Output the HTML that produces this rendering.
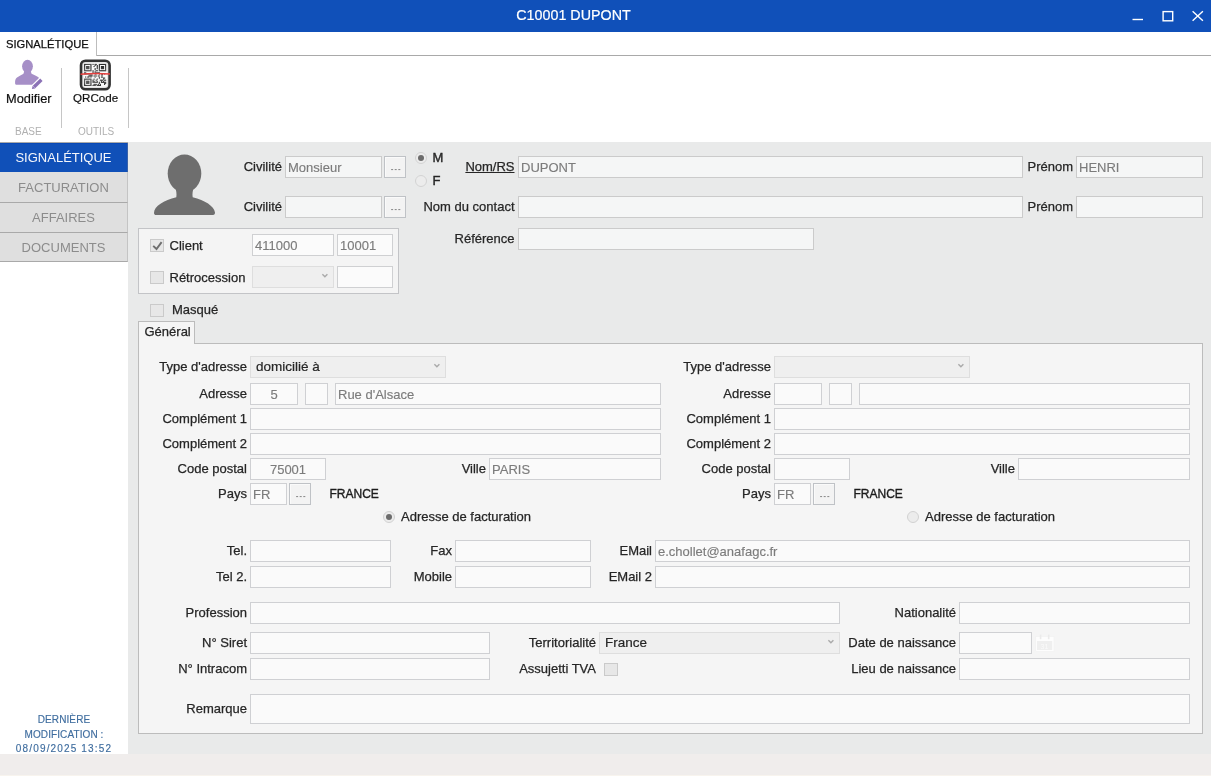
<!DOCTYPE html><html><head><meta charset="utf-8"><style>
*{margin:0;padding:0;box-sizing:border-box}
html,body{width:1211px;height:776px;overflow:hidden;background:#e9eaea;font-family:"Liberation Sans",sans-serif}
#wrap{left:0;top:0;width:1211px;height:776px;will-change:transform}
div,span,svg{position:absolute}
.t{font-size:13px;line-height:16px;color:#262626;white-space:nowrap;-webkit-text-stroke:0.25px #262626}
.r{text-align:right}
.fld{background:#fafafa;border:1px solid #cfd0d3}
.top .fld{background:#f5f6f6;border-color:#cbcbcb}
.top .fld.wf{background:#fbfbfb;border-color:#cfd0d2}
.v{top:1px;line-height:20px;font-size:13px;color:#7c7c7c;white-space:nowrap;-webkit-text-stroke:0.15px #7c7c7c}
.btn{background:#f3f3f3;border:1px solid #bfc2c6;box-shadow:inset 1px 1px 0 #fafafa}
.cmb{background:#efefef;border:1px solid #dedede}
.cv{left:5px;top:0;line-height:20px;font-size:13.5px;color:#262626;white-space:nowrap;-webkit-text-stroke:0.2px #262626}
.chev{top:6px}
.chk{width:14px;height:13px;background:#e7e7e7;border:1px solid #cacaca}
.rad{width:12px;height:12px;border-radius:50%;background:#ececec;border:1px solid #d2d2d2}
.dot{left:2px;top:2px;width:6px;height:6px;border-radius:50%;background:#6c6c6c}
</style></head><body><div id="wrap">
<div style="left:0;top:0;width:1211px;height:32px;background:#1050b9"></div>
<div style="left:0;top:5px;width:1147px;text-align:center;font-size:14.3px;line-height:20px;color:#fff;-webkit-text-stroke:0.2px #fff">C10001 DUPONT</div>
<svg style="left:1128px;top:6px" width="83" height="20"><path d="M4.5 13.5 H15" stroke="#fff" stroke-width="1.4"/><rect x="35.1" y="5.6" width="9.6" height="9.2" fill="none" stroke="#fff" stroke-width="1.4"/><path d="M64.6 5.2 L74.9 14.8 M74.9 5.2 L64.6 14.8" stroke="#fff" stroke-width="1.4"/></svg>
<div style="left:0;top:32px;width:1211px;height:110px;background:#fff"></div>
<div style="left:96px;top:55px;width:1115px;height:1px;background:#a9a9a9"></div>
<div style="left:96px;top:32px;width:1px;height:24px;background:#bdbdbd"></div>
<div style="left:6px;top:36px;font-size:11.2px;line-height:16px;color:#111;-webkit-text-stroke:0.25px #111">SIGNALÉTIQUE</div>
<svg style="left:0;top:55px" width="50" height="40" viewBox="0 0 50 40"><ellipse cx="27.5" cy="11.3" rx="5.4" ry="6.6" fill="#a68fc7"/><path d="M24.3 15.5 L30.7 15.5 L31.5 19 L23.5 19 Z" fill="#a68fc7"/><path d="M15.1 28.2 C15 25.5 15.4 23.8 17 22.5 C19 21 21.5 19.6 24 18.4 L31 18.4 C34 19.5 36.8 21 39 22.8 L38 29.7 L17 29.7 C15.8 29.7 15.1 29.2 15.1 28.2 Z" fill="#a68fc7"/><path d="M33.2 32.8 L41.6 24.6" stroke="#fff" stroke-width="6"/><path d="M34 32 L41.4 24.8" stroke="#8b72b6" stroke-width="3.4"/><path d="M31.9 34 L32.6 30.8 L35.3 33.4 Z" fill="#8b72b6"/></svg>
<div style="left:6px;top:90.5px;font-size:12.8px;line-height:16px;color:#111;-webkit-text-stroke:0.2px #111">Modifier</div>
<div style="left:15px;top:125px;font-size:10px;line-height:14px;color:#b0b0b0">BASE</div>
<div style="left:61px;top:68px;width:1px;height:60px;background:#c6c6c6"></div>
<svg style="left:78px;top:58px" width="34" height="34" viewBox="0 0 34 34"><rect x="3" y="2.7" width="28.6" height="28.6" rx="4.5" fill="#e2e2e2" stroke="#333" stroke-width="2.6"/><rect x="5.5" y="5.2" width="23.6" height="23.6" rx="1.5" fill="#fafafa"/><rect x="6.10" y="5.90" width="1.10" height="1.10" fill="#2a2a2a"/><rect x="7.15" y="5.90" width="1.10" height="1.10" fill="#2a2a2a"/><rect x="8.20" y="5.90" width="1.10" height="1.10" fill="#2a2a2a"/><rect x="9.25" y="5.90" width="1.10" height="1.10" fill="#2a2a2a"/><rect x="10.30" y="5.90" width="1.10" height="1.10" fill="#2a2a2a"/><rect x="11.35" y="5.90" width="1.10" height="1.10" fill="#2a2a2a"/><rect x="12.40" y="5.90" width="1.10" height="1.10" fill="#2a2a2a"/><rect x="14.50" y="5.90" width="1.10" height="1.10" fill="#2a2a2a"/><rect x="16.60" y="5.90" width="1.10" height="1.10" fill="#2a2a2a"/><rect x="17.65" y="5.90" width="1.10" height="1.10" fill="#2a2a2a"/><rect x="20.80" y="5.90" width="1.10" height="1.10" fill="#2a2a2a"/><rect x="21.85" y="5.90" width="1.10" height="1.10" fill="#2a2a2a"/><rect x="22.90" y="5.90" width="1.10" height="1.10" fill="#2a2a2a"/><rect x="23.95" y="5.90" width="1.10" height="1.10" fill="#2a2a2a"/><rect x="25.00" y="5.90" width="1.10" height="1.10" fill="#2a2a2a"/><rect x="26.05" y="5.90" width="1.10" height="1.10" fill="#2a2a2a"/><rect x="27.10" y="5.90" width="1.10" height="1.10" fill="#2a2a2a"/><rect x="6.10" y="6.95" width="1.10" height="1.10" fill="#2a2a2a"/><rect x="12.40" y="6.95" width="1.10" height="1.10" fill="#2a2a2a"/><rect x="16.60" y="6.95" width="1.10" height="1.10" fill="#2a2a2a"/><rect x="18.70" y="6.95" width="1.10" height="1.10" fill="#2a2a2a"/><rect x="20.80" y="6.95" width="1.10" height="1.10" fill="#2a2a2a"/><rect x="27.10" y="6.95" width="1.10" height="1.10" fill="#2a2a2a"/><rect x="6.10" y="8.00" width="1.10" height="1.10" fill="#2a2a2a"/><rect x="8.20" y="8.00" width="1.10" height="1.10" fill="#2a2a2a"/><rect x="9.25" y="8.00" width="1.10" height="1.10" fill="#2a2a2a"/><rect x="10.30" y="8.00" width="1.10" height="1.10" fill="#2a2a2a"/><rect x="12.40" y="8.00" width="1.10" height="1.10" fill="#2a2a2a"/><rect x="15.55" y="8.00" width="1.10" height="1.10" fill="#2a2a2a"/><rect x="18.70" y="8.00" width="1.10" height="1.10" fill="#2a2a2a"/><rect x="20.80" y="8.00" width="1.10" height="1.10" fill="#2a2a2a"/><rect x="22.90" y="8.00" width="1.10" height="1.10" fill="#2a2a2a"/><rect x="23.95" y="8.00" width="1.10" height="1.10" fill="#2a2a2a"/><rect x="25.00" y="8.00" width="1.10" height="1.10" fill="#2a2a2a"/><rect x="27.10" y="8.00" width="1.10" height="1.10" fill="#2a2a2a"/><rect x="6.10" y="9.05" width="1.10" height="1.10" fill="#2a2a2a"/><rect x="8.20" y="9.05" width="1.10" height="1.10" fill="#2a2a2a"/><rect x="9.25" y="9.05" width="1.10" height="1.10" fill="#2a2a2a"/><rect x="10.30" y="9.05" width="1.10" height="1.10" fill="#2a2a2a"/><rect x="12.40" y="9.05" width="1.10" height="1.10" fill="#2a2a2a"/><rect x="18.70" y="9.05" width="1.10" height="1.10" fill="#2a2a2a"/><rect x="20.80" y="9.05" width="1.10" height="1.10" fill="#2a2a2a"/><rect x="22.90" y="9.05" width="1.10" height="1.10" fill="#2a2a2a"/><rect x="23.95" y="9.05" width="1.10" height="1.10" fill="#2a2a2a"/><rect x="25.00" y="9.05" width="1.10" height="1.10" fill="#2a2a2a"/><rect x="27.10" y="9.05" width="1.10" height="1.10" fill="#2a2a2a"/><rect x="6.10" y="10.10" width="1.10" height="1.10" fill="#2a2a2a"/><rect x="8.20" y="10.10" width="1.10" height="1.10" fill="#2a2a2a"/><rect x="9.25" y="10.10" width="1.10" height="1.10" fill="#2a2a2a"/><rect x="10.30" y="10.10" width="1.10" height="1.10" fill="#2a2a2a"/><rect x="12.40" y="10.10" width="1.10" height="1.10" fill="#2a2a2a"/><rect x="16.60" y="10.10" width="1.10" height="1.10" fill="#2a2a2a"/><rect x="18.70" y="10.10" width="1.10" height="1.10" fill="#2a2a2a"/><rect x="20.80" y="10.10" width="1.10" height="1.10" fill="#2a2a2a"/><rect x="22.90" y="10.10" width="1.10" height="1.10" fill="#2a2a2a"/><rect x="23.95" y="10.10" width="1.10" height="1.10" fill="#2a2a2a"/><rect x="25.00" y="10.10" width="1.10" height="1.10" fill="#2a2a2a"/><rect x="27.10" y="10.10" width="1.10" height="1.10" fill="#2a2a2a"/><rect x="6.10" y="11.15" width="1.10" height="1.10" fill="#2a2a2a"/><rect x="12.40" y="11.15" width="1.10" height="1.10" fill="#2a2a2a"/><rect x="16.60" y="11.15" width="1.10" height="1.10" fill="#2a2a2a"/><rect x="20.80" y="11.15" width="1.10" height="1.10" fill="#2a2a2a"/><rect x="27.10" y="11.15" width="1.10" height="1.10" fill="#2a2a2a"/><rect x="6.10" y="12.20" width="1.10" height="1.10" fill="#2a2a2a"/><rect x="7.15" y="12.20" width="1.10" height="1.10" fill="#2a2a2a"/><rect x="8.20" y="12.20" width="1.10" height="1.10" fill="#2a2a2a"/><rect x="9.25" y="12.20" width="1.10" height="1.10" fill="#2a2a2a"/><rect x="10.30" y="12.20" width="1.10" height="1.10" fill="#2a2a2a"/><rect x="11.35" y="12.20" width="1.10" height="1.10" fill="#2a2a2a"/><rect x="12.40" y="12.20" width="1.10" height="1.10" fill="#2a2a2a"/><rect x="14.50" y="12.20" width="1.10" height="1.10" fill="#2a2a2a"/><rect x="17.65" y="12.20" width="1.10" height="1.10" fill="#2a2a2a"/><rect x="18.70" y="12.20" width="1.10" height="1.10" fill="#2a2a2a"/><rect x="20.80" y="12.20" width="1.10" height="1.10" fill="#2a2a2a"/><rect x="21.85" y="12.20" width="1.10" height="1.10" fill="#2a2a2a"/><rect x="22.90" y="12.20" width="1.10" height="1.10" fill="#2a2a2a"/><rect x="23.95" y="12.20" width="1.10" height="1.10" fill="#2a2a2a"/><rect x="25.00" y="12.20" width="1.10" height="1.10" fill="#2a2a2a"/><rect x="26.05" y="12.20" width="1.10" height="1.10" fill="#2a2a2a"/><rect x="27.10" y="12.20" width="1.10" height="1.10" fill="#2a2a2a"/><rect x="14.50" y="13.25" width="1.10" height="1.10" fill="#2a2a2a"/><rect x="16.60" y="13.25" width="1.10" height="1.10" fill="#2a2a2a"/><rect x="6.10" y="14.30" width="1.10" height="1.10" fill="#2a2a2a"/><rect x="7.15" y="14.30" width="1.10" height="1.10" fill="#2a2a2a"/><rect x="14.50" y="14.30" width="1.10" height="1.10" fill="#2a2a2a"/><rect x="16.60" y="14.30" width="1.10" height="1.10" fill="#2a2a2a"/><rect x="17.65" y="14.30" width="1.10" height="1.10" fill="#2a2a2a"/><rect x="18.70" y="14.30" width="1.10" height="1.10" fill="#2a2a2a"/><rect x="19.75" y="14.30" width="1.10" height="1.10" fill="#2a2a2a"/><rect x="20.80" y="14.30" width="1.10" height="1.10" fill="#2a2a2a"/><rect x="6.10" y="15.35" width="1.10" height="1.10" fill="#2a2a2a"/><rect x="7.15" y="15.35" width="1.10" height="1.10" fill="#2a2a2a"/><rect x="8.20" y="15.35" width="1.10" height="1.10" fill="#2a2a2a"/><rect x="9.25" y="15.35" width="1.10" height="1.10" fill="#2a2a2a"/><rect x="10.30" y="15.35" width="1.10" height="1.10" fill="#2a2a2a"/><rect x="17.65" y="15.35" width="1.10" height="1.10" fill="#2a2a2a"/><rect x="23.95" y="15.35" width="1.10" height="1.10" fill="#2a2a2a"/><rect x="26.05" y="15.35" width="1.10" height="1.10" fill="#2a2a2a"/><rect x="11.35" y="16.40" width="1.10" height="1.10" fill="#2a2a2a"/><rect x="12.40" y="16.40" width="1.10" height="1.10" fill="#2a2a2a"/><rect x="13.45" y="16.40" width="1.10" height="1.10" fill="#2a2a2a"/><rect x="16.60" y="16.40" width="1.10" height="1.10" fill="#2a2a2a"/><rect x="20.80" y="16.40" width="1.10" height="1.10" fill="#2a2a2a"/><rect x="22.90" y="16.40" width="1.10" height="1.10" fill="#2a2a2a"/><rect x="23.95" y="16.40" width="1.10" height="1.10" fill="#2a2a2a"/><rect x="10.30" y="17.45" width="1.10" height="1.10" fill="#2a2a2a"/><rect x="11.35" y="17.45" width="1.10" height="1.10" fill="#2a2a2a"/><rect x="12.40" y="17.45" width="1.10" height="1.10" fill="#2a2a2a"/><rect x="13.45" y="17.45" width="1.10" height="1.10" fill="#2a2a2a"/><rect x="15.55" y="17.45" width="1.10" height="1.10" fill="#2a2a2a"/><rect x="17.65" y="17.45" width="1.10" height="1.10" fill="#2a2a2a"/><rect x="19.75" y="17.45" width="1.10" height="1.10" fill="#2a2a2a"/><rect x="7.15" y="18.50" width="1.10" height="1.10" fill="#2a2a2a"/><rect x="9.25" y="18.50" width="1.10" height="1.10" fill="#2a2a2a"/><rect x="10.30" y="18.50" width="1.10" height="1.10" fill="#2a2a2a"/><rect x="12.40" y="18.50" width="1.10" height="1.10" fill="#2a2a2a"/><rect x="16.60" y="18.50" width="1.10" height="1.10" fill="#2a2a2a"/><rect x="20.80" y="18.50" width="1.10" height="1.10" fill="#2a2a2a"/><rect x="22.90" y="18.50" width="1.10" height="1.10" fill="#2a2a2a"/><rect x="23.95" y="18.50" width="1.10" height="1.10" fill="#2a2a2a"/><rect x="20.80" y="19.55" width="1.10" height="1.10" fill="#2a2a2a"/><rect x="25.00" y="19.55" width="1.10" height="1.10" fill="#2a2a2a"/><rect x="26.05" y="19.55" width="1.10" height="1.10" fill="#2a2a2a"/><rect x="6.10" y="20.60" width="1.10" height="1.10" fill="#2a2a2a"/><rect x="7.15" y="20.60" width="1.10" height="1.10" fill="#2a2a2a"/><rect x="8.20" y="20.60" width="1.10" height="1.10" fill="#2a2a2a"/><rect x="9.25" y="20.60" width="1.10" height="1.10" fill="#2a2a2a"/><rect x="10.30" y="20.60" width="1.10" height="1.10" fill="#2a2a2a"/><rect x="11.35" y="20.60" width="1.10" height="1.10" fill="#2a2a2a"/><rect x="12.40" y="20.60" width="1.10" height="1.10" fill="#2a2a2a"/><rect x="15.55" y="20.60" width="1.10" height="1.10" fill="#2a2a2a"/><rect x="18.70" y="20.60" width="1.10" height="1.10" fill="#2a2a2a"/><rect x="25.00" y="20.60" width="1.10" height="1.10" fill="#2a2a2a"/><rect x="6.10" y="21.65" width="1.10" height="1.10" fill="#2a2a2a"/><rect x="12.40" y="21.65" width="1.10" height="1.10" fill="#2a2a2a"/><rect x="14.50" y="21.65" width="1.10" height="1.10" fill="#2a2a2a"/><rect x="17.65" y="21.65" width="1.10" height="1.10" fill="#2a2a2a"/><rect x="21.85" y="21.65" width="1.10" height="1.10" fill="#2a2a2a"/><rect x="22.90" y="21.65" width="1.10" height="1.10" fill="#2a2a2a"/><rect x="23.95" y="21.65" width="1.10" height="1.10" fill="#2a2a2a"/><rect x="26.05" y="21.65" width="1.10" height="1.10" fill="#2a2a2a"/><rect x="27.10" y="21.65" width="1.10" height="1.10" fill="#2a2a2a"/><rect x="6.10" y="22.70" width="1.10" height="1.10" fill="#2a2a2a"/><rect x="8.20" y="22.70" width="1.10" height="1.10" fill="#2a2a2a"/><rect x="9.25" y="22.70" width="1.10" height="1.10" fill="#2a2a2a"/><rect x="10.30" y="22.70" width="1.10" height="1.10" fill="#2a2a2a"/><rect x="12.40" y="22.70" width="1.10" height="1.10" fill="#2a2a2a"/><rect x="14.50" y="22.70" width="1.10" height="1.10" fill="#2a2a2a"/><rect x="15.55" y="22.70" width="1.10" height="1.10" fill="#2a2a2a"/><rect x="18.70" y="22.70" width="1.10" height="1.10" fill="#2a2a2a"/><rect x="22.90" y="22.70" width="1.10" height="1.10" fill="#2a2a2a"/><rect x="25.00" y="22.70" width="1.10" height="1.10" fill="#2a2a2a"/><rect x="6.10" y="23.75" width="1.10" height="1.10" fill="#2a2a2a"/><rect x="8.20" y="23.75" width="1.10" height="1.10" fill="#2a2a2a"/><rect x="9.25" y="23.75" width="1.10" height="1.10" fill="#2a2a2a"/><rect x="10.30" y="23.75" width="1.10" height="1.10" fill="#2a2a2a"/><rect x="12.40" y="23.75" width="1.10" height="1.10" fill="#2a2a2a"/><rect x="14.50" y="23.75" width="1.10" height="1.10" fill="#2a2a2a"/><rect x="15.55" y="23.75" width="1.10" height="1.10" fill="#2a2a2a"/><rect x="16.60" y="23.75" width="1.10" height="1.10" fill="#2a2a2a"/><rect x="17.65" y="23.75" width="1.10" height="1.10" fill="#2a2a2a"/><rect x="18.70" y="23.75" width="1.10" height="1.10" fill="#2a2a2a"/><rect x="20.80" y="23.75" width="1.10" height="1.10" fill="#2a2a2a"/><rect x="22.90" y="23.75" width="1.10" height="1.10" fill="#2a2a2a"/><rect x="23.95" y="23.75" width="1.10" height="1.10" fill="#2a2a2a"/><rect x="25.00" y="23.75" width="1.10" height="1.10" fill="#2a2a2a"/><rect x="26.05" y="23.75" width="1.10" height="1.10" fill="#2a2a2a"/><rect x="27.10" y="23.75" width="1.10" height="1.10" fill="#2a2a2a"/><rect x="6.10" y="24.80" width="1.10" height="1.10" fill="#2a2a2a"/><rect x="8.20" y="24.80" width="1.10" height="1.10" fill="#2a2a2a"/><rect x="9.25" y="24.80" width="1.10" height="1.10" fill="#2a2a2a"/><rect x="10.30" y="24.80" width="1.10" height="1.10" fill="#2a2a2a"/><rect x="12.40" y="24.80" width="1.10" height="1.10" fill="#2a2a2a"/><rect x="20.80" y="24.80" width="1.10" height="1.10" fill="#2a2a2a"/><rect x="26.05" y="24.80" width="1.10" height="1.10" fill="#2a2a2a"/><rect x="27.10" y="24.80" width="1.10" height="1.10" fill="#2a2a2a"/><rect x="6.10" y="25.85" width="1.10" height="1.10" fill="#2a2a2a"/><rect x="12.40" y="25.85" width="1.10" height="1.10" fill="#2a2a2a"/><rect x="15.55" y="25.85" width="1.10" height="1.10" fill="#2a2a2a"/><rect x="16.60" y="25.85" width="1.10" height="1.10" fill="#2a2a2a"/><rect x="17.65" y="25.85" width="1.10" height="1.10" fill="#2a2a2a"/><rect x="19.75" y="25.85" width="1.10" height="1.10" fill="#2a2a2a"/><rect x="21.85" y="25.85" width="1.10" height="1.10" fill="#2a2a2a"/><rect x="26.05" y="25.85" width="1.10" height="1.10" fill="#2a2a2a"/><rect x="6.10" y="26.90" width="1.10" height="1.10" fill="#2a2a2a"/><rect x="7.15" y="26.90" width="1.10" height="1.10" fill="#2a2a2a"/><rect x="8.20" y="26.90" width="1.10" height="1.10" fill="#2a2a2a"/><rect x="9.25" y="26.90" width="1.10" height="1.10" fill="#2a2a2a"/><rect x="10.30" y="26.90" width="1.10" height="1.10" fill="#2a2a2a"/><rect x="11.35" y="26.90" width="1.10" height="1.10" fill="#2a2a2a"/><rect x="12.40" y="26.90" width="1.10" height="1.10" fill="#2a2a2a"/><rect x="14.50" y="26.90" width="1.10" height="1.10" fill="#2a2a2a"/><rect x="15.55" y="26.90" width="1.10" height="1.10" fill="#2a2a2a"/><rect x="16.60" y="26.90" width="1.10" height="1.10" fill="#2a2a2a"/><rect x="18.70" y="26.90" width="1.10" height="1.10" fill="#2a2a2a"/><rect x="19.75" y="26.90" width="1.10" height="1.10" fill="#2a2a2a"/><rect x="20.80" y="26.90" width="1.10" height="1.10" fill="#2a2a2a"/><rect x="21.85" y="26.90" width="1.10" height="1.10" fill="#2a2a2a"/><path d="M2.5 16.3 C10 15.5 24 15.5 32 16" stroke="#e8403f" stroke-width="1.4" fill="none"/></svg>
<div style="left:73px;top:90px;font-size:11.6px;line-height:16px;color:#111;-webkit-text-stroke:0.2px #111">QRCode</div>
<div style="left:78px;top:125px;font-size:10px;line-height:14px;color:#b0b0b0">OUTILS</div>
<div style="left:128px;top:68px;width:1px;height:60px;background:#c6c6c6"></div>
<div style="left:0;top:142px;width:128px;height:612px;background:#fff"></div>
<div style="left:0;top:142px;width:128px;height:30px;background:#1050b8"></div>
<div style="left:0;top:142px;width:128px;height:1px;background:#a9a9a9"></div>
<div style="left:0;top:143px;width:127px;height:1px;background:#0848b6"></div>
<div style="left:127px;top:143px;width:1px;height:29px;background:#3a62a8"></div>
<div style="left:0;top:150px;width:127px;text-align:center;font-size:13px;line-height:16px;color:#f4f6fb">SIGNALÉTIQUE</div>
<div style="left:0;top:172px;width:128px;height:31px;background:#dfdfdf;border-right:1px solid #c4c4c4;border-bottom:1px solid #a9a9a9"></div>
<div style="left:0;top:180px;width:127px;text-align:center;font-size:13px;line-height:16px;color:#8c8c8c">FACTURATION</div>
<div style="left:0;top:203px;width:128px;height:30px;background:#dfdfdf;border-right:1px solid #c4c4c4;border-bottom:1px solid #a9a9a9"></div>
<div style="left:0;top:210px;width:127px;text-align:center;font-size:13px;line-height:16px;color:#8c8c8c">AFFAIRES</div>
<div style="left:0;top:233px;width:128px;height:29px;background:#dfdfdf;border-right:1px solid #c4c4c4;border-bottom:1px solid #a9a9a9"></div>
<div style="left:0;top:240px;width:127px;text-align:center;font-size:13px;line-height:16px;color:#8c8c8c">DOCUMENTS</div>
<div style="left:0;top:713px;width:128px;text-align:center;font-size:10px;line-height:14.5px;color:#3f6d9f;letter-spacing:0.1px;-webkit-text-stroke:0.15px #3f6d9f">DERNIÈRE<br>MODIFICATION :<br><span style="position:static;letter-spacing:1.15px">08/09/2025 13:52</span></div>
<div style="left:0;top:754px;width:1211px;height:22px;background:#f0edec"></div>
<div style="left:0;top:775px;width:1211px;height:1px;background:#f8f4ee"></div>
<div class="top" style="left:0;top:0;width:1211px;height:776px">
<svg style="left:150px;top:152px" width="68" height="66" viewBox="0 0 68 66"><ellipse cx="34.5" cy="21.5" rx="16.8" ry="19" fill="#6e6e6e"/><path d="M24.5 34 C26.5 38 26.8 42 26.3 45.3 C14 48.5 4 54 4 61 C4 62.5 5 63 6 63 L63 63 C64.5 63 65 62 65 60.5 C64 54 55 48.5 42.7 45.3 C42.2 42 42.5 38 44.5 34 Z" fill="#6e6e6e"/></svg>
<div class="t r" style="right:929px;top:158.5px;">Civilité</div>
<div class="fld" style="left:285px;top:156px;width:97px;height:22px"><span class="v" style="left:2px">Monsieur</span></div>
<div class="btn" style="left:384px;top:156px;width:22px;height:22px"><svg width="20" height="20" style="left:0;top:0"><g fill="#8f8f8f"><rect x="6.1" y="12" width="2" height="1.1"/><rect x="9.7" y="12" width="2" height="1.1"/><rect x="13.3" y="12" width="2" height="1.1"/></g></svg></div>
<div class="t r" style="right:929px;top:198.5px;">Civilité</div>
<div class="fld" style="left:285px;top:196px;width:97px;height:22px"></div>
<div class="btn" style="left:384px;top:196px;width:22px;height:22px"><svg width="20" height="20" style="left:0;top:0"><g fill="#8f8f8f"><rect x="6.1" y="12" width="2" height="1.1"/><rect x="9.7" y="12" width="2" height="1.1"/><rect x="13.3" y="12" width="2" height="1.1"/></g></svg></div>
<div class="rad" style="left:414.5px;top:152px"><div class="dot"></div></div>
<div class="t" style="left:432.5px;top:149.5px;-webkit-text-stroke:0.4px #262626">M</div>
<div class="rad" style="left:414.5px;top:175px"></div>
<div class="t" style="left:432.5px;top:172.5px;-webkit-text-stroke:0.4px #262626">F</div>
<div class="t r" style="right:696.5px;top:158.5px;text-decoration:underline">Nom/RS</div>
<div class="fld" style="left:518px;top:156px;width:505px;height:22px"><span class="v" style="left:2px">DUPONT</span></div>
<div class="t r" style="right:138px;top:158.5px;">Prénom</div>
<div class="fld" style="left:1076px;top:156px;width:127px;height:22px"><span class="v" style="left:2px">HENRI</span></div>
<div class="t r" style="right:696.5px;top:198.5px;">Nom du contact</div>
<div class="fld" style="left:518px;top:196px;width:505px;height:22px"></div>
<div class="t r" style="right:138px;top:198.5px;">Prénom</div>
<div class="fld" style="left:1076px;top:196px;width:127px;height:22px"></div>
<div class="t r" style="right:696.5px;top:230.5px;">Référence</div>
<div class="fld" style="left:518px;top:228px;width:296px;height:22px"></div>
<div style="left:138px;top:228px;width:261px;height:66px;background:#f4f4f4;border:1px solid #c3c4c7"></div>
<div class="chk" style="left:150px;top:239px"><svg width="14" height="13" style="left:-1px;top:-1px"><path d="M3.2 6.9 L6.5 10 L11.6 3.1" fill="none" stroke="#6e6e6e" stroke-width="1.9"/></svg></div>
<div class="t" style="left:169.5px;top:237.5px;">Client</div>
<div class="fld wf" style="left:252px;top:234px;width:82px;height:22px"><span class="v" style="left:2px">411000</span></div>
<div class="fld wf" style="left:337px;top:234px;width:56px;height:22px"><span class="v" style="left:2px">10001</span></div>
<div class="chk" style="left:150px;top:271px"></div>
<div class="t" style="left:169.5px;top:269.5px;">Rétrocession</div>
<div class="cmb" style="left:252px;top:266px;width:82px;height:22px"><svg class="chev" width="9" height="6" style="left:67px"><path d="M2.4 1.2 L4.9 3.7 L7.4 1.2" fill="none" stroke="#aaaaaa" stroke-width="1.4"/></svg></div>
<div class="fld wf" style="left:337px;top:266px;width:56px;height:22px"></div>
<div class="chk" style="left:150px;top:304px"></div>
<div class="t" style="left:172px;top:301.5px;">Masqué</div>
</div>
<div style="left:138px;top:343px;width:1065px;height:391px;background:#f5f5f5;border:1px solid #bcbcbc"></div>
<div style="left:138px;top:321px;width:57px;height:23px;background:#f5f5f5;border:1px solid #bcbcbc;border-bottom:none"></div>
<div class="t" style="left:144.5px;top:323.5px;">Général</div>
<div class="t r" style="right:964px;top:358.5px;">Type d'adresse</div>
<div class="cmb" style="left:250px;top:356px;width:196px;height:22px"><span class="cv">domicilié à</span><svg class="chev" width="9" height="6" style="left:181px"><path d="M2.4 1.2 L4.9 3.7 L7.4 1.2" fill="none" stroke="#aaaaaa" stroke-width="1.4"/></svg></div>
<div class="t r" style="right:964px;top:385.5px;">Adresse</div>
<div class="fld" style="left:250px;top:383px;width:48px;height:22px"><span class="v" style="left:0;right:0;text-align:center">5</span></div>
<div class="fld" style="left:305px;top:383px;width:23px;height:22px"></div>
<div class="fld" style="left:335px;top:383px;width:326px;height:22px"><span class="v" style="left:2px">Rue d'Alsace</span></div>
<div class="t r" style="right:964px;top:410.5px;">Complément 1</div>
<div class="fld" style="left:250px;top:408px;width:411px;height:22px"></div>
<div class="t r" style="right:964px;top:435.5px;">Complément 2</div>
<div class="fld" style="left:250px;top:433px;width:411px;height:22px"></div>
<div class="t r" style="right:964px;top:460.5px;">Code postal</div>
<div class="fld" style="left:250px;top:458px;width:76px;height:22px"><span class="v" style="left:0;right:0;text-align:center">75001</span></div>
<div class="t r" style="right:725px;top:460.5px;">Ville</div>
<div class="fld" style="left:489px;top:458px;width:172px;height:22px"><span class="v" style="left:2px">PARIS</span></div>
<div class="t r" style="right:964px;top:485.5px;">Pays</div>
<div class="fld" style="left:250px;top:483px;width:37px;height:22px"><span class="v" style="left:2px">FR</span></div>
<div class="btn" style="left:289px;top:483px;width:22px;height:22px"><svg width="20" height="20" style="left:0;top:0"><g fill="#8f8f8f"><rect x="6.1" y="12" width="2" height="1.1"/><rect x="9.7" y="12" width="2" height="1.1"/><rect x="13.3" y="12" width="2" height="1.1"/></g></svg></div>
<div class="t" style="left:329.5px;top:485.5px;font-size:12px;color:#1c1c1c;-webkit-text-stroke:0.35px #1c1c1c">FRANCE</div>
<div class="rad" style="left:382.5px;top:511px"><div class="dot"></div></div>
<div class="t" style="left:401px;top:508.5px;">Adresse de facturation</div>
<div class="t r" style="right:440px;top:358.5px;">Type d'adresse</div>
<div class="cmb" style="left:774px;top:356px;width:196px;height:22px"><svg class="chev" width="9" height="6" style="left:181px"><path d="M2.4 1.2 L4.9 3.7 L7.4 1.2" fill="none" stroke="#aaaaaa" stroke-width="1.4"/></svg></div>
<div class="t r" style="right:440px;top:385.5px;">Adresse</div>
<div class="fld" style="left:774px;top:383px;width:48px;height:22px"></div>
<div class="fld" style="left:829px;top:383px;width:23px;height:22px"></div>
<div class="fld" style="left:859px;top:383px;width:331px;height:22px"></div>
<div class="t r" style="right:440px;top:410.5px;">Complément 1</div>
<div class="fld" style="left:774px;top:408px;width:416px;height:22px"></div>
<div class="t r" style="right:440px;top:435.5px;">Complément 2</div>
<div class="fld" style="left:774px;top:433px;width:416px;height:22px"></div>
<div class="t r" style="right:440px;top:460.5px;">Code postal</div>
<div class="fld" style="left:774px;top:458px;width:76px;height:22px"></div>
<div class="t r" style="right:196px;top:460.5px;">Ville</div>
<div class="fld" style="left:1018px;top:458px;width:172px;height:22px"></div>
<div class="t r" style="right:440px;top:485.5px;">Pays</div>
<div class="fld" style="left:774px;top:483px;width:37px;height:22px"><span class="v" style="left:2px">FR</span></div>
<div class="btn" style="left:813px;top:483px;width:22px;height:22px"><svg width="20" height="20" style="left:0;top:0"><g fill="#8f8f8f"><rect x="6.1" y="12" width="2" height="1.1"/><rect x="9.7" y="12" width="2" height="1.1"/><rect x="13.3" y="12" width="2" height="1.1"/></g></svg></div>
<div class="t" style="left:853.5px;top:485.5px;font-size:12px;color:#1c1c1c;-webkit-text-stroke:0.35px #1c1c1c">FRANCE</div>
<div class="rad" style="left:906.5px;top:511px"></div>
<div class="t" style="left:925px;top:508.5px;">Adresse de facturation</div>
<div class="t r" style="right:964px;top:542.5px;">Tel.</div>
<div class="fld" style="left:250px;top:540px;width:141px;height:22px"></div>
<div class="t r" style="right:964px;top:568.5px;">Tel 2.</div>
<div class="fld" style="left:250px;top:566px;width:141px;height:22px"></div>
<div class="t r" style="right:759px;top:542.5px;">Fax</div>
<div class="fld" style="left:455px;top:540px;width:136px;height:22px"></div>
<div class="t r" style="right:759px;top:568.5px;">Mobile</div>
<div class="fld" style="left:455px;top:566px;width:136px;height:22px"></div>
<div class="t r" style="right:559px;top:542.5px;">EMail</div>
<div class="fld" style="left:655px;top:540px;width:535px;height:22px"><span class="v" style="left:2px">e.chollet@anafagc.fr</span></div>
<div class="t r" style="right:559px;top:568.5px;">EMail 2</div>
<div class="fld" style="left:655px;top:566px;width:535px;height:22px"></div>
<div class="t r" style="right:964px;top:604.5px;">Profession</div>
<div class="fld" style="left:250px;top:602px;width:590px;height:22px"></div>
<div class="t r" style="right:255px;top:604.5px;">Nationalité</div>
<div class="fld" style="left:959px;top:602px;width:231px;height:22px"></div>
<div class="t r" style="right:964px;top:634.5px;">N° Siret</div>
<div class="fld" style="left:250px;top:632px;width:240px;height:22px"></div>
<div class="t r" style="right:615px;top:634.5px;">Territorialité</div>
<div class="cmb" style="left:599px;top:632px;width:241px;height:22px"><span class="cv">France</span><svg class="chev" width="9" height="6" style="left:226px"><path d="M2.4 1.2 L4.9 3.7 L7.4 1.2" fill="none" stroke="#aaaaaa" stroke-width="1.4"/></svg></div>
<div class="t r" style="right:255px;top:634.5px;">Date de naissance</div>
<div class="fld" style="left:959px;top:632px;width:73px;height:22px"></div>
<svg style="left:1034px;top:633px" width="22" height="20"><rect x="1.8" y="3.3" width="18.2" height="15.3" fill="#fdfdfd" stroke="#f0f0f0" stroke-width="0.6"/><rect x="3" y="8" width="15.2" height="9" fill="#efefef"/><rect x="5.8" y="1.6" width="1.6" height="4.6" fill="#ebebeb"/><rect x="13.9" y="1.6" width="1.6" height="4.6" fill="#ebebeb"/><text x="6.5" y="15.5" font-family="Liberation Sans" font-size="7" fill="#fafafa">31</text></svg>
<div class="t r" style="right:964px;top:660.5px;">N° Intracom</div>
<div class="fld" style="left:250px;top:658px;width:240px;height:22px"></div>
<div class="t r" style="right:615px;top:660.5px;">Assujetti TVA</div>
<div class="chk" style="left:604px;top:663px"></div>
<div class="t r" style="right:255px;top:660.5px;">Lieu de naissance</div>
<div class="fld" style="left:959px;top:658px;width:231px;height:22px"></div>
<div class="t r" style="right:964px;top:700.5px;">Remarque</div>
<div class="fld" style="left:250px;top:694px;width:940px;height:30px"></div>
</div></body></html>
